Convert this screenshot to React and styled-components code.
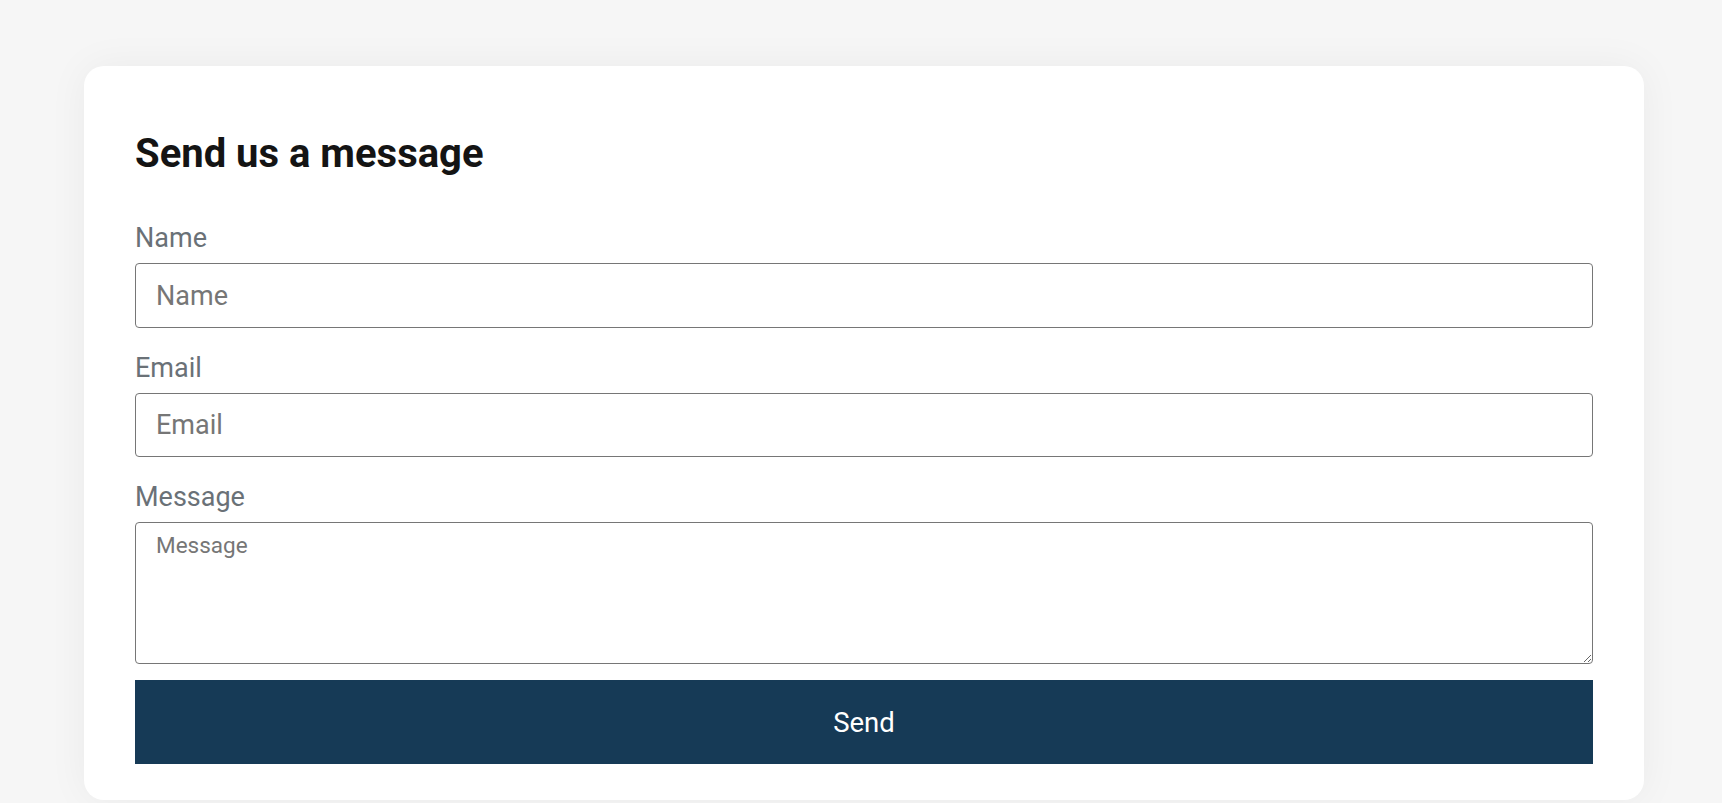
import React from "react";
import styled, { createGlobalStyle } from "styled-components";

const Global = createGlobalStyle`
  html, body {
    margin: 0;
    padding: 0;
    background: #f6f6f6;
    font-family: Roboto, "Liberation Sans", Arial, sans-serif;
  }
  * { box-sizing: border-box; }
`;

const Page = styled.main`
  min-height: 803px;
  padding: 66px 78px 40px 84px;
`;

const Card = styled.section`
  width: 1560px;
  background: #ffffff;
  border-radius: 20px;
  box-shadow: 0 0 40px rgba(0, 0, 0, 0.05);
  padding: 64px 51px 36px 51px;
`;

const Title = styled.h2`
  margin: 0 0 45px 0;
  font-family: Roboto, "Liberation Sans", Arial, sans-serif;
  font-weight: 700;
  font-size: 40px;
  line-height: 48px;
  color: #141414;
`;

const Form = styled.form`
  display: flex;
  flex-direction: column;
`;

const Field = styled.div`
  display: flex;
  flex-direction: column;
  gap: 10px;
  margin-bottom: ${(p) => p.$mb || 25}px;
`;

const Label = styled.label`
  font-family: Roboto, "Liberation Sans", Arial, sans-serif;
  font-size: 27px;
  line-height: 30px;
  color: #6a7177;
`;

const Input = styled.input`
  width: 100%;
  height: ${(p) => p.$h || 64}px;
  padding: 0 20px;
  border: 1px solid #767676;
  border-radius: 4px;
  font-family: Roboto, "Liberation Sans", Arial, sans-serif;
  font-size: 27px;
  color: #222;
  background: #fff;
  outline: none;
  &::placeholder {
    color: #767676;
  }
`;

const TextArea = styled.textarea`
  width: 100%;
  height: 142px;
  padding: 9px 20px;
  border: 1px solid #767676;
  border-radius: 4px;
  font-family: Roboto, "Liberation Sans", Arial, sans-serif;
  font-size: 22.5px;
  line-height: 26px;
  color: #222;
  background: #fff;
  outline: none;
  resize: vertical;
  display: block;
  &::placeholder {
    color: #767676;
  }
`;

const SendButton = styled.button`
  width: 100%;
  height: 84px;
  border: none;
  border-radius: 0;
  background: #163a56;
  color: #ffffff;
  font-family: Roboto, "Liberation Sans", Arial, sans-serif;
  font-size: 27.5px;
  cursor: pointer;
`;

export default function App() {
  return (
    <>
      <Global />
      <Page>
        <Card>
          <Title>Send us a message</Title>
          <Form onSubmit={(e) => e.preventDefault()}>
            <Field>
              <Label htmlFor="name">Name</Label>
              <Input id="name" type="text" placeholder="Name" $h={65} />
            </Field>
            <Field>
              <Label htmlFor="email">Email</Label>
              <Input id="email" type="email" placeholder="Email" />
            </Field>
            <Field $mb={16}>
              <Label htmlFor="message">Message</Label>
              <TextArea id="message" placeholder="Message" />
            </Field>
            <SendButton type="submit">Send</SendButton>
          </Form>
        </Card>
      </Page>
    </>
  );
}
